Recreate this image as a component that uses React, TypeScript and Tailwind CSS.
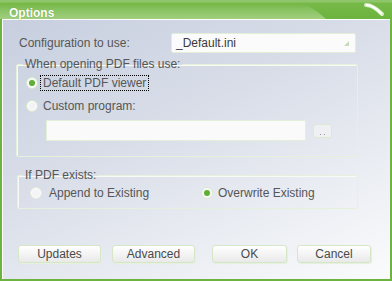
import { useState } from "react";

const font = { fontFamily: '"Liberation Sans", Arial, sans-serif' };

const Radio = ({ checked, dim }: { checked?: boolean; dim?: boolean }) => (
  <span
    className={`flex h-[12px] w-[12px] shrink-0 items-center justify-center rounded-full border ${
      dim ? "border-[#e4eedc] bg-[#f4f5f6]" : "border-[#d6e8c8] bg-[#f3f4f5]"
    } shadow-[inset_0_0_0_1px_#ffffff]`}
  >
    {checked && <span className="h-[6px] w-[6px] rounded-full bg-[#5fae35]" />}
  </span>
);

const Button = ({ label, w }: { label: string; w: string }) => (
  <button
    className={`${w} h-[18px] rounded-[3px] border border-[#d5e7c6] bg-[linear-gradient(#ffffff,#e9e9e9)] text-[12px] leading-[16px] text-[#4a4a4a] shadow-[1px_1px_0_#e6f0de]`}
  >
    {label}
  </button>
);

export default function App() {
  const [viewer, setViewer] = useState<"default" | "custom">("default");
  const [exists, setExists] = useState<"append" | "overwrite">("overwrite");

  return (
    <div className="flex h-[281px] w-[392px] flex-col overflow-hidden" style={font}>
      {/* Title bar */}
      <div className="relative h-[19px] shrink-0 bg-[linear-gradient(#8fc66b_0px,#8fc66b_2px,#76b948_3px,#6db33f_100%)]">
        <svg className="absolute inset-0" width="392" height="19" viewBox="0 0 392 19">
          <defs>
            <linearGradient id="hl" x1="0" y1="0" x2="0" y2="1">
              <stop offset="0" stopColor="#ffffff" stopOpacity="0" />
              <stop offset="1" stopColor="#dff0c8" stopOpacity="0.45" />
            </linearGradient>
          </defs>
          <path d="M0 4 L300 4 C312 6 318 12 326 19 L0 19 Z" fill="url(#hl)" />
          <path d="M366 5 C372 5 377 9 382 14" stroke="#d8efc4" strokeWidth="4" fill="none" strokeLinecap="round" />
          <path d="M367 5 C372 5.5 377 9 381 13.5" stroke="#ffffff" strokeWidth="2" fill="none" strokeLinecap="round" />
        </svg>
        <span className="relative ml-[9px] text-[12px] font-bold leading-[19px] text-white [text-shadow:0_0_1px_#5a9a30]">
          Options
        </span>
      </div>

      {/* Body */}
      <div className="flex min-h-0 flex-1 border-b-2 border-l-2 border-r-2 border-[#6db33f]">
        <div className="flex flex-1 flex-col border-l border-t border-white bg-[linear-gradient(155deg,#c7cfdf_0%,#d8dde8_40%,#fafbfc_100%)] text-[12px] text-[#565656]">
          {/* Config row */}
          <div className="mt-[13px] flex h-[20px] items-center pl-[16px]">
            <span className="w-[152px]">Configuration to use:</span>
            <div className="flex h-[20px] w-[185px] items-center justify-between rounded-[2px] border border-[#e2eed8] bg-[#fbfbfb] pl-[4px] pr-[6px] text-[#3a3a3a]">
              <span>_Default.ini</span>
              <svg width="5" height="5" viewBox="0 0 5 5">
                <path d="M5 0 L5 5 L0 5 Z" fill="#c9dcb8" />
              </svg>
            </div>
          </div>

          {/* Group 1 */}
          <fieldset className="ml-[13px] mt-[4px] w-[342px] rounded-[2px] border border-[#e6f1dc] px-[6px] pb-[15px] pt-[3px] shadow-[inset_1px_1px_0_#f7fbf3]">
            <legend className="px-[2px] leading-[14px]">When opening PDF files use:</legend>
            <div
              className="flex h-[18px] cursor-default items-center pl-[3px]"
              onClick={() => setViewer("default")}
            >
              <Radio checked={viewer === "default"} />
              <span className="ml-[2px] border border-dotted border-black px-[2px] leading-[14px]">
                Default PDF viewer
              </span>
            </div>
            <div
              className="mt-[5px] flex h-[18px] cursor-default items-center pl-[3px]"
              onClick={() => setViewer("custom")}
            >
              <Radio checked={viewer === "custom"} />
              <span className="ml-[5px]">Custom program:</span>
            </div>
            <div className="mt-[5px] flex items-center pl-[23px]">
              <div className="h-[21px] w-[260px] border border-[#e4efda] bg-[#fafafa]" />
              <div className="ml-[7px] flex h-[14px] w-[19px] items-end justify-center gap-[3px] rounded-[3px] border border-[#dcebd0] bg-[#eef0f3] pb-[2px]">
                <span className="h-[1px] w-[1px] bg-[#999]" />
                <span className="h-[1px] w-[1px] bg-[#999]" />
              </div>
            </div>
          </fieldset>

          {/* Group 2 */}
          <fieldset className="ml-[14px] mt-[11px] w-[341px] rounded-[2px] border border-[#e6f1dc] px-[5px] pb-[6px] pt-[2px] shadow-[inset_1px_1px_0_#f7fbf3]">
            <legend className="px-[2px] leading-[14px]">If PDF exists:</legend>
            <div className="flex h-[18px] items-center">
              <div
                className="flex w-[178px] cursor-default items-center pl-[7px]"
                onClick={() => setExists("append")}
              >
                <Radio checked={exists === "append"} dim />
                <span className="ml-[7px]">Append to Existing</span>
              </div>
              <div className="flex cursor-default items-center" onClick={() => setExists("overwrite")}>
                <Radio checked={exists === "overwrite"} />
                <span className="ml-[5px]">Overwrite Existing</span>
              </div>
            </div>
          </fieldset>

          {/* Buttons */}
          <div className="mt-auto mb-[16px] flex items-center pl-[15px]">
            <Button label="Updates" w="w-[83px]" />
            <div className="ml-[11px]">
              <Button label="Advanced" w="w-[83px]" />
            </div>
            <div className="ml-[17px]">
              <Button label="OK" w="w-[75px]" />
            </div>
            <div className="ml-[10px]">
              <Button label="Cancel" w="w-[74px]" />
            </div>
          </div>
        </div>
      </div>
    </div>
  );
}
